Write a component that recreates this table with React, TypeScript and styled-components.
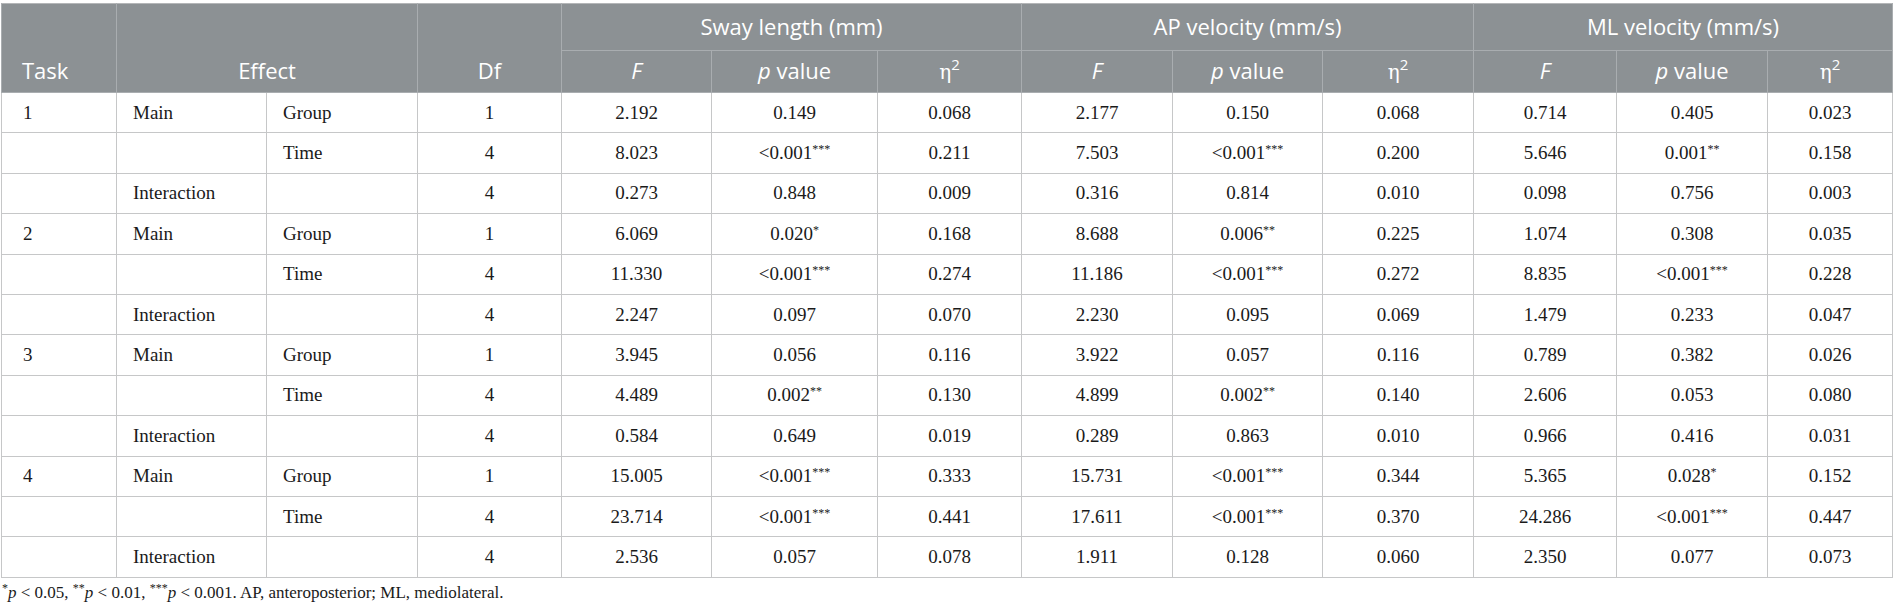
import React, { FC } from 'react'
import styled, { createGlobalStyle } from 'styled-components'

type Row = {
	task?: string
	effect?: string
	term?: string
	df: string
	values: Array<string>
}

const rows: Array<Row> = [
	{ task: '1', effect: 'Main', term: 'Group', df: '1', values: ['2.192', '0.149', '0.068', '2.177', '0.150', '0.068', '0.714', '0.405', '0.023'] },
	{ term: 'Time', df: '4', values: ['8.023', '<0.001***', '0.211', '7.503', '<0.001***', '0.200', '5.646', '0.001**', '0.158'] },
	{ effect: 'Interaction', df: '4', values: ['0.273', '0.848', '0.009', '0.316', '0.814', '0.010', '0.098', '0.756', '0.003'] },
	{ task: '2', effect: 'Main', term: 'Group', df: '1', values: ['6.069', '0.020*', '0.168', '8.688', '0.006**', '0.225', '1.074', '0.308', '0.035'] },
	{ term: 'Time', df: '4', values: ['11.330', '<0.001***', '0.274', '11.186', '<0.001***', '0.272', '8.835', '<0.001***', '0.228'] },
	{ effect: 'Interaction', df: '4', values: ['2.247', '0.097', '0.070', '2.230', '0.095', '0.069', '1.479', '0.233', '0.047'] },
	{ task: '3', effect: 'Main', term: 'Group', df: '1', values: ['3.945', '0.056', '0.116', '3.922', '0.057', '0.116', '0.789', '0.382', '0.026'] },
	{ term: 'Time', df: '4', values: ['4.489', '0.002**', '0.130', '4.899', '0.002**', '0.140', '2.606', '0.053', '0.080'] },
	{ effect: 'Interaction', df: '4', values: ['0.584', '0.649', '0.019', '0.289', '0.863', '0.010', '0.966', '0.416', '0.031'] },
	{ task: '4', effect: 'Main', term: 'Group', df: '1', values: ['15.005', '<0.001***', '0.333', '15.731', '<0.001***', '0.344', '5.365', '0.028*', '0.152'] },
	{ term: 'Time', df: '4', values: ['23.714', '<0.001***', '0.441', '17.611', '<0.001***', '0.370', '24.286', '<0.001***', '0.447'] },
	{ effect: 'Interaction', df: '4', values: ['2.536', '0.057', '0.078', '1.911', '0.128', '0.060', '2.350', '0.077', '0.073'] },
]

const groups = ['Sway length (mm)', 'AP velocity (mm/s)', 'ML velocity (mm/s)']
const widths = [115, 150, 151, 144, 150, 166, 144, 151, 150, 151, 143, 151, 125]

// split "<0.001***" into the number and its stars
function Value({ text }: { text: string }) {
	const match = text.match(/^(.*?)(\*+)$/)
	if (!match) return <>{text}</>
	return <>{match[1]}<Stars>{match[2]}</Stars></>
}

const App: FC = () => {
	return (
		<Page>
			<GlobalStyle />
			<Table>
				<colgroup>
					{widths.map((w, i) => <col key={i} style={{ width: w }} />)}
				</colgroup>
				<thead>
					<GroupRow>
						<Th rowSpan={2} $left>Task</Th>
						<Th rowSpan={2} colSpan={2}>Effect</Th>
						<Th rowSpan={2}>Df</Th>
						{groups.map((g) => <Th key={g} colSpan={3} $group>{g}</Th>)}
					</GroupRow>
					<SubRow>
						{groups.map((g) => (
							<React.Fragment key={g}>
								<Th><i>F</i></Th>
								<Th><i>p</i> value</Th>
								<Th><Eta>η</Eta><sup>2</sup></Th>
							</React.Fragment>
						))}
					</SubRow>
				</thead>
				<tbody>
					{rows.map((row, i) => (
						<BodyRow key={i}>
							<Td $align='left' $pad={21}>{row.task}</Td>
							<Td $align='left'>{row.effect}</Td>
							<Td $align='left'>{row.term}</Td>
							<Td>{row.df}</Td>
							{row.values.map((v, j) => <Td key={j}><Value text={v} /></Td>)}
						</BodyRow>
					))}
				</tbody>
			</Table>
			<Footnote>
				<Stars>*</Stars><i>p</i> &lt; 0.05, <Stars>**</Stars><i>p</i> &lt; 0.01, <Stars>***</Stars><i>p</i> &lt; 0.001. AP, anteroposterior; ML, mediolateral.
			</Footnote>
		</Page>
	)
}

export default App

const GlobalStyle = createGlobalStyle`
	body {
		margin: 0;
		background: #ffffff;
	}
`

const Page = styled.div`
	padding: 3px 4px 0 1px;
	font-family: 'Liberation Serif', 'Times New Roman', serif;
	color: #1a1a1a;
`

const Table = styled.table`
	width: 1892px;
	table-layout: fixed;
	border-collapse: collapse;
	border: 1px solid #b4b6b8;
`

const GroupRow = styled.tr`
	height: 47px;
`

const SubRow = styled.tr`
	height: 42px;
`

const Th = styled.th<{ $left?: boolean; $group?: boolean }>`
	background: #8c9194;
	color: #ffffff;
	font-family: 'Open Sans', 'Noto Sans', sans-serif;
	font-size: 22px;
	font-weight: 400;
	text-align: ${(p) => (p.$left ? 'left' : 'center')};
	vertical-align: ${(p) => (p.$group ? 'middle' : 'bottom')};
	padding: 0 ${(p) => (p.$left ? '20px' : '8px')} ${(p) => (p.$group ? '2px' : '7px')};
	border: 1px solid #a9adb0;
	border-top: none;
	white-space: nowrap;

	i {
		font-style: italic;
	}

	sup {
		font-size: 15px;
		line-height: 0;
		vertical-align: 9px;
	}
`

const Eta = styled.span`
	font-family: 'DejaVu Serif', 'Liberation Serif', serif;
	font-size: 20px;
`

const BodyRow = styled.tr`
	height: 40.4px;
`

const Td = styled.td<{ $align?: 'left' | 'center'; $pad?: number }>`
	font-size: 19px;
	text-align: ${(p) => p.$align || 'center'};
	padding: 0 16px 0 ${(p) => (p.$pad !== undefined ? p.$pad : 16)}px;
	border: 1px solid #c6c7c8;
	vertical-align: middle;
	white-space: nowrap;
`

const Stars = styled.sup`
	font-size: 12px;
	line-height: 0;
	vertical-align: 6px;
`

const Footnote = styled.div`
	margin-top: 5px;
	padding-left: 1px;
	font-size: 17px;
	line-height: 20px;
`
